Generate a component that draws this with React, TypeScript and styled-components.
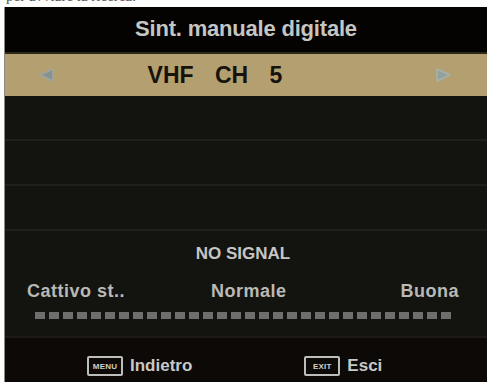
import React from 'react'
import styled, { createGlobalStyle } from 'styled-components'

const Global = createGlobalStyle`
  *, *::before, *::after {
    box-sizing: border-box;
  }
  html, body {
    margin: 0;
    padding: 0;
    background: #fff;
  }
  body {
    width: 487px;
    height: 382px;
    overflow: hidden;
  }
`

const Page = styled.div`
  width: 487px;
  height: 382px;
  display: flex;
  flex-direction: column;
  background: #fdfdfb;
  overflow: hidden;
`

const Caption = styled.div`
  flex: none;
  height: 7px;
  overflow: hidden;
  padding-left: 6px;
  font-family: 'Liberation Serif', serif;
  font-size: 15px;
  line-height: 15px;
  color: #555;
  & > span {
    display: block;
    margin-top: -11px;
  }
`

const Screen = styled.div`
  flex: 1;
  min-height: 0;
  margin-left: 4px;
  display: flex;
  flex-direction: column;
  background: #131410;
  font-family: 'Liberation Sans', Arial, sans-serif;
  font-weight: bold;
  border-left: 1px solid #8a8a86;
`

const TitleBar = styled.div`
  flex: none;
  height: 47px;
  background: #050302;
  display: flex;
  align-items: center;
  justify-content: center;
  color: #c4c6c2;
  font-size: 22px;
  letter-spacing: -0.2px;
  border-bottom: 2px solid #2e2819;
  padding-bottom: 2px;
`

const ChannelBar = styled.div`
  flex: none;
  height: 42px;
  background: #b39f70;
  display: flex;
  align-items: center;
  padding: 0 34px 0 32px;
`

const Channel = styled.div`
  flex: 1;
  text-align: center;
  color: #17130c;
  font-size: 23px;
  word-spacing: 15px;
  margin-right: 60px;
`

const Arrow = styled.svg`
  width: 20px;
  height: 20px;
  flex: none;
`

const Rows = styled.div`
  flex: none;
  display: flex;
  flex-direction: column;
`

const Row = styled.div`
  height: 45px;
  border-bottom: 2px solid #1f201b;
`

const Signal = styled.div`
  flex: none;
  margin-top: 13px;
  text-align: center;
  color: #c6c6c4;
  font-size: 17px;
  line-height: 19px;
  padding-right: 6px;
`

const Scale = styled.div`
  flex: none;
  display: flex;
  padding: 0 28px 0 22px;
  margin-top: 18px;
  color: #b9b9b6;
  font-size: 18px;
  line-height: 20px;
  letter-spacing: 0.5px;
`

const Mark = styled.span<{ $gap?: string }>`
  margin-left: ${(p) => p.$gap ?? '0'};
`

const Meter = styled.div`
  flex: none;
  display: flex;
  gap: 4px;
  padding: 0 0 0 30px;
  margin-top: 11px;
`

const Cell = styled.div`
  width: 10px;
  height: 7px;
  background: #6e6f6c;
`

const Footer = styled.div`
  flex: none;
  margin-top: auto;
  height: 46px;
  background: #0c0907;
  border-top: 2px solid #1d1a16;
  display: flex;
  align-items: center;
  color: #c8c8c6;
  font-size: 17px;
  padding-top: 12px;
`

const Hint = styled.div<{ $left: number }>`
  display: flex;
  align-items: center;
  gap: 7px;
  margin-left: ${(p) => p.$left}px;
`

const Key = styled.span`
  display: flex;
  align-items: center;
  justify-content: center;
  width: 36px;
  height: 20px;
  border: 2px solid #bdbdbb;
  border-radius: 2px;
  font-size: 8px;
  color: #d0d0ce;
  letter-spacing: 0.2px;
`

export default function App() {
  const cells = Array.from({ length: 30 })
  return (
    <Page>
      <Global />
      <Caption>
        <span>per avviare la ricerca.</span>
      </Caption>
      <Screen>
        <TitleBar>Sint. manuale digitale</TitleBar>
        <ChannelBar>
          <Arrow viewBox="0 0 20 20">
            <path d="M16 4 L3 10 L16 16 Z" fill="#87928c" stroke="#9ea6a0" strokeWidth="1.5" strokeLinejoin="round" />
          </Arrow>
          <Channel>VHF CH 5</Channel>
          <Arrow viewBox="0 0 20 20">
            <path d="M4 4 L17 10 L4 16 Z" fill="#94a29e" stroke="#a8b2ac" strokeWidth="1.5" strokeLinejoin="round" />
          </Arrow>
        </ChannelBar>
        <Rows>
          <Row />
          <Row />
          <Row />
        </Rows>
        <Signal>NO SIGNAL</Signal>
        <Scale>
          <Mark>Cattivo st..</Mark>
          <Mark $gap="86px">Normale</Mark>
          <Mark $gap="auto">Buona</Mark>
        </Scale>
        <Meter>
          {cells.map((_, i) => (
            <Cell key={i} />
          ))}
        </Meter>
        <Footer>
          <Hint $left={82}>
            <Key>MENU</Key>
            Indietro
          </Hint>
          <Hint $left={112}>
            <Key>EXIT</Key>
            Esci
          </Hint>
        </Footer>
      </Screen>
    </Page>
  )
}
